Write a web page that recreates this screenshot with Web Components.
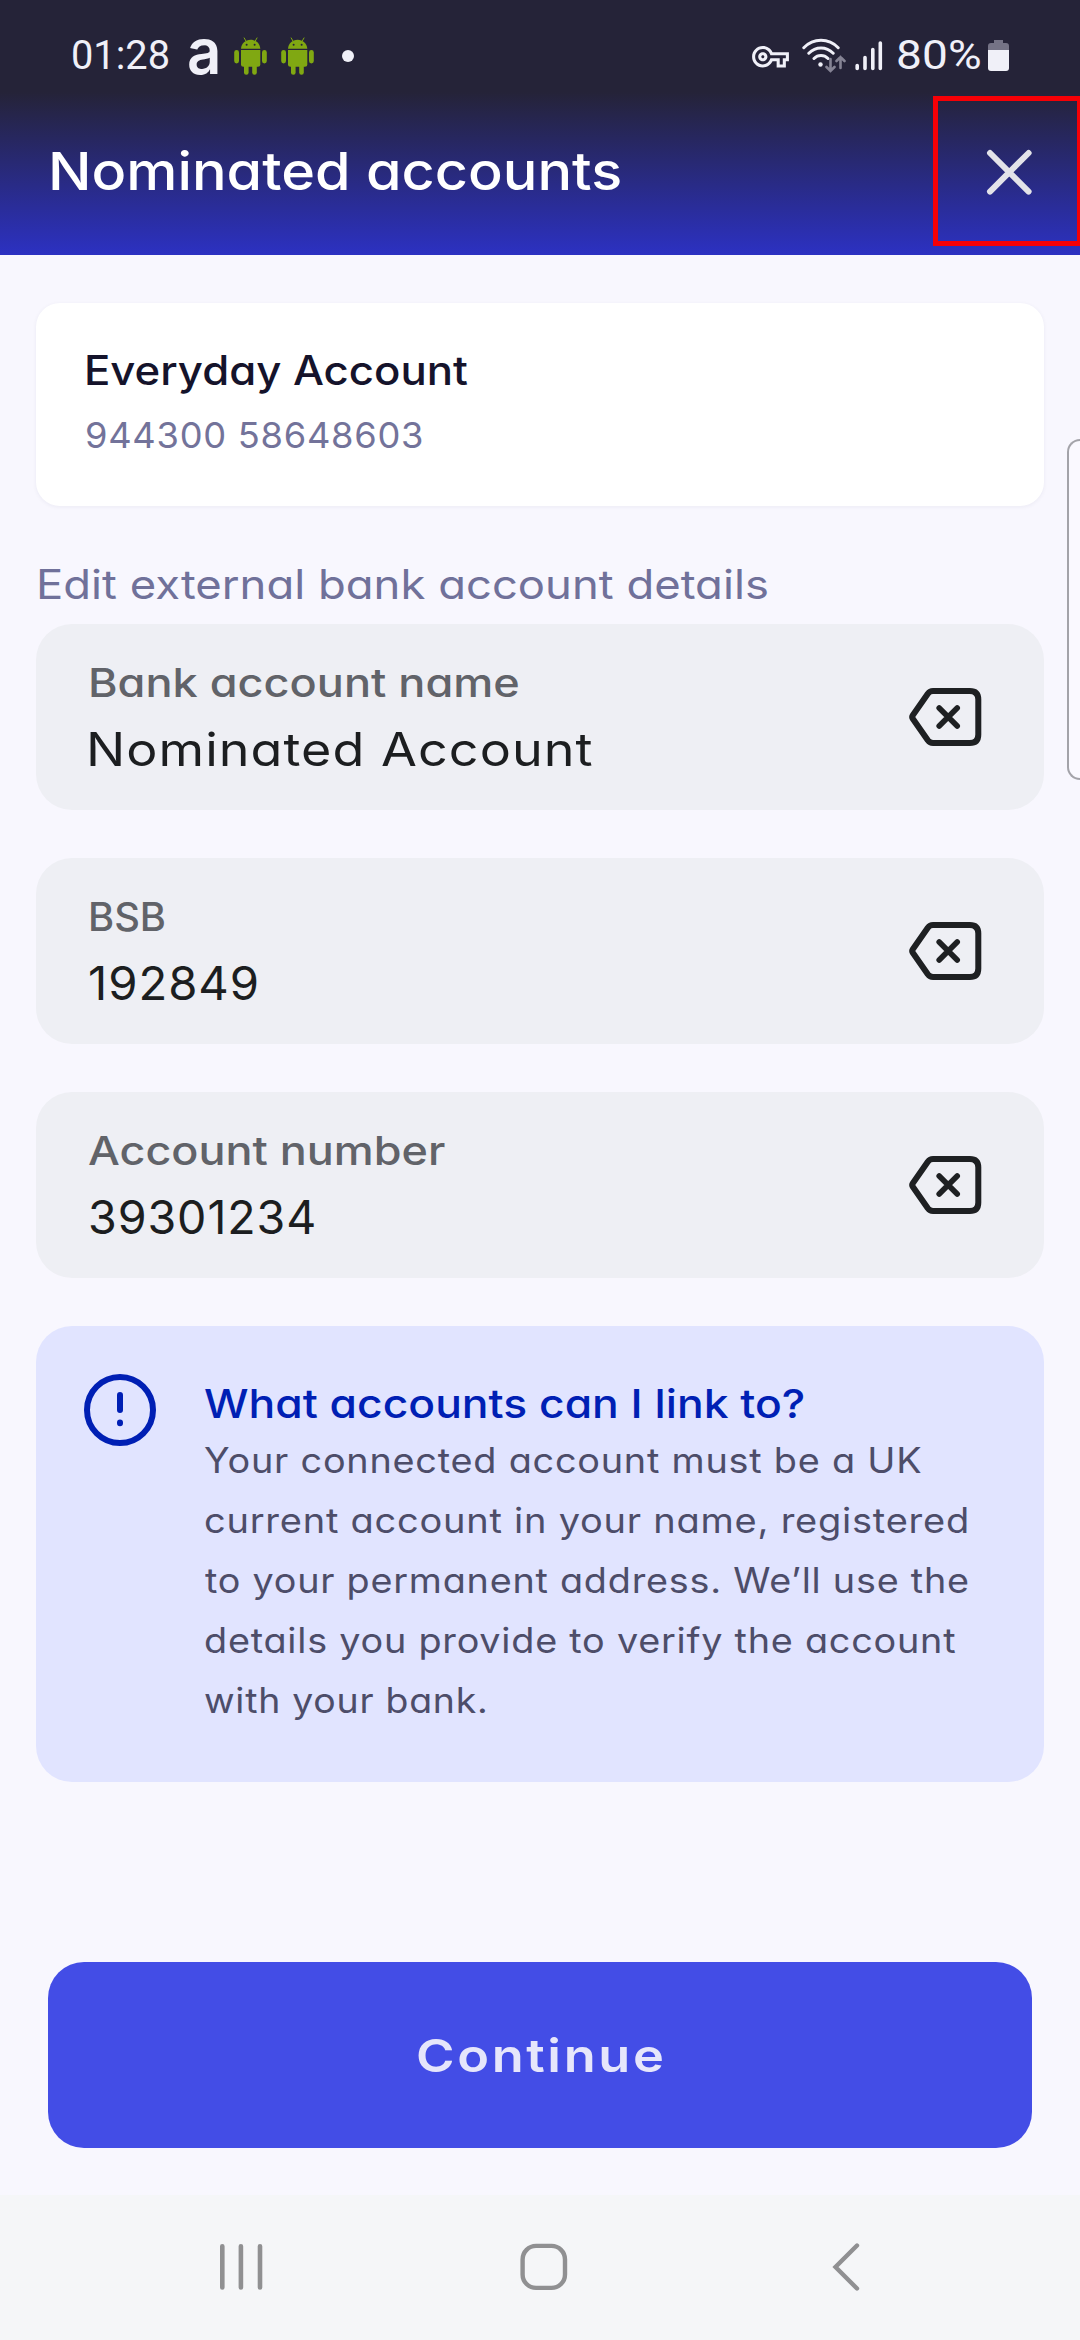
<!DOCTYPE html>
<html lang="en">
<head>
<meta charset="utf-8">
<title>Nominated accounts</title>
<style>
  html, body { margin: 0; padding: 0; background: #f8f7fe; }
  body { font-family: Inter, "Open Sans", sans-serif; }
</style>
</head>
<body>
<app-screen></app-screen>
<script>
const define = (name, html, extra) => {
  const tpl = document.createElement('template');
  tpl.innerHTML = html;
  customElements.define(name, class extends HTMLElement {
    connectedCallback() {
      if (this.shadowRoot) return;
      this.attachShadow({ mode: 'open' }).appendChild(tpl.content.cloneNode(true));
      if (extra) extra(this, this.shadowRoot);
    }
  });
};

/* One line of type, widened and tracked to a given ink width; nudge trims the side bearing. */
const pen = document.createElement('canvas').getContext('2d');
define('type-line', `
<style>
  :host { display: block; white-space: nowrap; }
  span { display: inline-block; transform-origin: 0 50%; font-optical-sizing: none; font-feature-settings: "cv11" 1; }
  :host([plain]) span { font-feature-settings: normal; }
</style><span></span>`, (el, root) => {
  const span = root.querySelector('span');
  const text = el.getAttribute('text');
  const size = +el.getAttribute('size');
  const weight = el.getAttribute('weight') || 400;
  const family = el.getAttribute('family') || 'Inter';
  const target = +el.getAttribute('ink');
  const nudge = +el.getAttribute('nudge') || 0;
  span.textContent = text;
  el.style.cssText += `;width:${target}px;font:${weight} ${size}px/${el.getAttribute('line')}px ${family},sans-serif;color:${el.getAttribute('color')}`;
  pen.font = `${weight} ${size}px ${family}, sans-serif`;
  const first = pen.measureText(text[0]);
  const last = pen.measureText(text[text.length - 1]);
  const lsb = -first.actualBoundingBoxLeft;
  const rsb = last.width - last.actualBoundingBoxRight;
  const ink = span.getBoundingClientRect().width - lsb - rsb;
  const gaps = text.length - 1;
  const want = (+el.getAttribute('track') || 0) * size;
  const scale = Math.min(1.15, Math.max(.88, target / (ink + want * gaps)));
  const track = gaps ? (target / scale - ink) / gaps : 0;
  span.style.letterSpacing = track.toFixed(3) + 'px';
  span.style.marginLeft = (nudge - lsb * scale).toFixed(2) + 'px';
  span.style.transform = `scaleX(${scale.toFixed(4)})`;
});

define('android-icon', `
<style>:host{display:block;width:33px;height:38px}svg{display:block}</style>
<svg width="33" height="38" viewBox="0 0 33 38" fill="#80a812">
  <path d="M7 11.7C7.4 6.3 11.4 2.7 16.6 2.7s9.2 3.6 9.7 9z"/>
  <path d="M10 .6l2 3.6M23.200 .6l-2 3.600" stroke="#80a812" stroke-width="1"/>
  <circle cx="12.600" cy="7.700" r="1" fill="#252338"/><circle cx="20.600" cy="7.700" r="1" fill="#252338"/>
  <path d="M7 13h19.300v14.200a2.500 2.500 0 0 1-2.500 2.500h-14.300a2.500 2.500 0 0 1-2.500-2.500z"/>
  <rect x=".2" y="13" width="4.800" height="13.500" rx="2.400"/><rect x="28" y="13" width="4.800" height="13.500" rx="2.400"/>
  <rect x="10" y="26" width="4.600" height="11.700" rx="2.200"/><rect x="18.200" y="26" width="4.600" height="11.700" rx="2.200"/>
</svg>`);

define('status-bar', `
<style>
  :host { display: flex; box-sizing: border-box; height: 92px; padding: 0 71px 0 72.700px; background: #252338; justify-content: space-between; align-items: flex-start; }
  .side { display: flex; align-items: flex-start; }
  svg { display: block; }
  type-line { margin-top: 32px; }
  .logo { margin: 22px 0 0 20.500px; }
  .dot { width: 12px; height: 12px; border-radius: 50%; background: #f0f0f8; margin: 50px 0 0 28px; }
</style>
<div class="side">
  <type-line text="01:28" size="40" line="48" family="Roboto" ink="95.600" color="#f0f0f8"></type-line>
  <type-line class="logo" plain text="a" size="64" line="58" weight="600" ink="29" color="#f0f0f8"></type-line>
  <android-icon style="margin:37px 0 0 16px"></android-icon>
  <android-icon style="margin:37px 0 0 14px"></android-icon>
  <div class="dot"></div>
</div>
<div class="side">
  <svg style="margin-top:46px" width="37" height="21.500" viewBox="0 5 24 14" fill="#f0f0f8"><path d="M22 19h-6v-4h-2.680c-1.140 2.420-3.600 4-6.320 4-3.860 0-7-3.140-7-7s3.140-7 7-7c2.720 0 5.170 1.580 6.320 4H24v6h-2v4zm-4-2h2v-4h2v-2H11.940l-.23-.67C11.010 8.340 9.110 7 7 7c-2.760 0-5 2.240-5 5s2.240 5 5 5c2.110 0 4.010-1.340 4.710-3.330l.23-.67H18v4zM7 15c-1.650 0-3-1.350-3-3s1.350-3 3-3 3 1.350 3 3-1.350 3-3 3zm0-4c-.55 0-1 .45-1 1s.45 1 1 1 1-.45 1-1-.45-1-1-1z"/></svg>
  <svg style="margin:38px 0 0 13px" width="44" height="36" viewBox="0 0 44 36" fill="none" stroke="#f0f0f8" stroke-width="3" stroke-linecap="round">
    <path d="M1.800 9.700C11.500-.2 26.500-.2 36.200 9.700M6.800 15.200c7-6.900 17.400-6.900 24.400 0M12 20.500c4-3.900 10-3.900 14 0"/>
    <circle cx="18.500" cy="26.500" r="2.200" fill="#f0f0f8" stroke="none"/>
    <path d="M28.500 21v11.500M24.500 29l4 4 4-4M38.500 30V19M34.500 23l4-4 4 4" stroke="#858394" stroke-width="2.600"/>
  </svg>
  <svg style="margin:40px 0 0 9px" width="30" height="32" viewBox="0 0 30 32" stroke="#f0f0f8" stroke-width="3.600" stroke-linecap="round">
    <path d="M2.200 25.500v3M10 17.500v11M17.800 9.500v19M25.300 3v25.500"/></svg>
  <type-line style="margin-left:13.500px" text="80%" size="40" line="48" family="Roboto" ink="81.800" color="#f0f0f8"></type-line>
  <svg style="margin:40px 0 0 7.500px" width="21" height="31.500" viewBox="0 0 21 31.500">
    <path d="M6 0h9v3h3a3 3 0 0 1 3 3v5H0V6a3 3 0 0 1 3-3h3z" fill="#757386"/>
    <path d="M0 10h21v18a3 3 0 0 1-3 3H3a3 3 0 0 1-3-3z" fill="#f0f0f8"/></svg>
</div>`);

define('close-button', `
<style>
  :host { display: flex; box-sizing: border-box; flex: none; width: 149px; height: 150px; border: 5.500px solid #f60006; padding: 48px 0 0 48px; }
  svg { display: block; flex: none; }
</style>
<svg width="48" height="48" viewBox="0 0 48 48"><path d="M4 4l38.600 38.600M42.600 4L4 42.600" stroke="#e3e3e9" stroke-width="6" stroke-linecap="round"/></svg>`);

define('app-header', `
<style>
  :host { display: flex; box-sizing: border-box; height: 163px; padding-left: 51.400px; justify-content: space-between; align-items: flex-start; overflow: hidden; background: linear-gradient(#252338, #2c31c2); }
  type-line { margin-top: 49px; }
  close-button { margin: 4px -2px 0 0; }
</style>
<type-line text="Nominated accounts" size="52.500" line="60" weight="500" nudge="1.200" ink="567.300" color="#fff"></type-line>
<close-button></close-button>`);

define('account-card', `
<style>
  :host { display: flex; flex-direction: column; box-sizing: border-box; height: 203px; gap: 8.500px; padding: 37.600px 0 0 50.800px; border-radius: 24px; background: #fff; box-shadow: 0 1px 4px rgba(40,40,80,.06); }
</style>
<slot></slot>`);

define('edit-field', `
<style>
  :host { display: flex; box-sizing: border-box; height: 186px; padding: 28.600px 61px 0 53.500px; border-radius: 36px; background: #eeeff4; justify-content: space-between; }
  .text { display: flex; flex-direction: column; gap: 3.700px; }
  svg { display: block; margin-top: 34.400px; }
</style>
<div class="text"><slot></slot></div>
<svg width="74" height="60" viewBox="0 0 74 60" fill="none" stroke="#1e2022" stroke-linecap="round" stroke-linejoin="round">
  <path stroke-width="6" d="M24 4h36.800q8.500 0 8.500 8.500v35q0 8.500-8.500 8.500H24q-3.200 0-5.200-2.700L3.800 31.700Q2.600 30 3.800 28.300L18.800 6.700Q20.800 4 24 4z"/>
  <path stroke-width="5.600" d="M30.200 21l18 18M48.200 21l-18 18"/>
</svg>`);

define('info-card', `
<style>
  :host { display: flex; box-sizing: border-box; height: 456px; border-radius: 36px; background: #e1e4ff; padding: 48px 0 0 48px; }
  svg { display: block; flex: none; }
  .text { margin: 3px 0 0 49.500px; }
</style>
<svg width="72" height="72" viewBox="0 0 72 72" fill="none" stroke="#001fb4" stroke-width="6" stroke-linecap="round">
  <circle cx="36" cy="36" r="33"/><path d="M36 21v15M36 48.500v.8"/></svg>
<div class="text"><slot></slot></div>`);

define('primary-button', `
<style>
  :host { display: flex; box-sizing: border-box; height: 186px; margin: 0 48px; border-radius: 36px; background: #434de6; justify-content: center; align-items: flex-start; padding-top: 63.600px; }
</style>
<slot></slot>`);

define('nav-bar', `
<style>
  :host { display: flex; box-sizing: border-box; height: 145px; padding: 46px 219px 0 218px; background: #f5f6f8; justify-content: space-between; align-items: flex-start; }
  svg { display: block; }
  .home { margin-right: 7px; }
</style>
<svg width="47" height="52" viewBox="0 0 47 52" stroke="#909092" stroke-width="4.600" stroke-linecap="round"><path d="M4.300 5.200v41.200M22.900 5.200v41.200M42 5.200v41.200"/></svg>
<svg class="home" width="52" height="52" viewBox="0 0 52 52" fill="none" stroke="#909092" stroke-width="4.400"><rect x="4.600" y="4.900" width="42.400" height="42" rx="13.500"/></svg>
<svg width="32" height="52" viewBox="0 0 32 52" fill="none" stroke="#909092" stroke-width="4.400" stroke-linecap="round" stroke-linejoin="miter"><path d="M28 4.500L6.500 26 28 47.500"/></svg>`);

define('edge-handle', `
<style>
  :host { display: block; position: absolute; left: 1067px; top: 438.500px; width: 13px; height: 341px; box-sizing: border-box; border: 2.500px solid #a3a3a9; border-right: 0; border-radius: 14px 0 0 14px; background: #faf9ff; }
</style>`);

const field = (label, lw, ln, value, vw, vn) => `<edit-field>
  <type-line text="${label}" size="39.500" line="60" weight="500" nudge="${ln}" ink="${lw}" color="#616369"></type-line>
  <type-line text="${value}" size="46" line="66" track=".02" nudge="${vn}" ink="${vw}" color="#1c1e20"></type-line>
</edit-field>`;
const body = (text, w, n = 0) => `<type-line text="${text}" size="35" line="60" track=".02" nudge="${n}" ink="${w}" color="#4d4d69"></type-line>`;

define('app-screen', `
<style>
  :host { display: flex; flex-direction: column; position: relative; width: 1080px; height: 2340px; overflow: hidden; background: #f8f7fe; }
  main { display: flex; flex-direction: column; padding: 48px 36px 0; }
  .heading { margin: 46.800px 0 8.200px 3.300px; }
  .fields { display: flex; flex-direction: column; gap: 48px; }
  primary-button { margin-top: 180px; }
  nav-bar { margin-top: auto; }
</style>
<status-bar></status-bar>
<app-header></app-header>
<main>
  <account-card>
    <type-line text="Everyday Account" size="40.400" line="60" weight="500" ink="379.800" color="#15132b"></type-line>
    <type-line text="944300 58648603" size="35.500" line="54" track=".02" ink="334.500" color="#73739a"></type-line>
  </account-card>
  <type-line class="heading" text="Edit external bank account details" size="40.500" line="63" ink="728" color="#70719a"></type-line>
  <div class="fields">
    ${field('Bank account name', 427, 1.5, 'Nominated Account', 502, 1.5)}
    ${field('BSB', 73, 1.2, '192849', 166.5, 1)}
    ${field('Account number', 357, -2, '39301234', 224.5, 0.5)}
    <info-card>
      <type-line text="What accounts can I link to?" size="40" line="53" weight="500" nudge="-1.500" ink="600" color="#001fb4"></type-line>
      ${body('Your connected account must be a UK', 717, -1.5)}
      ${body('current account in your name, registered', 761.500)}
      ${body('to your permanent address. We’ll use the', 762.500, -0.5)}
      ${body('details you provide to verify the account', 750)}
      ${body('with your bank.', 280.500)}
    </info-card>
  </div>
</main>
<primary-button><type-line text="Continue" size="45.500" line="60" weight="600" track=".05" nudge="1" ink="244.500" color="#e6e6fb"></type-line></primary-button>
<nav-bar></nav-bar>
<edge-handle></edge-handle>`);
</script>
</body>
</html>
